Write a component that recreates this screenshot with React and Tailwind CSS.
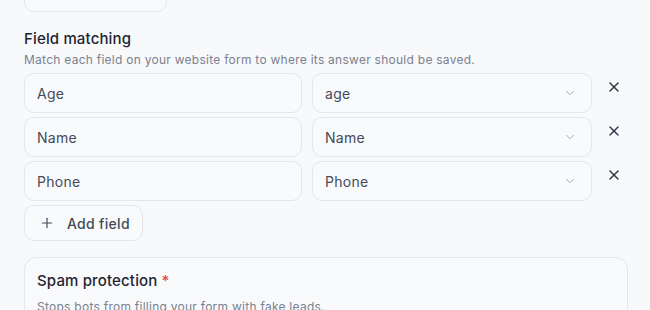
import React, { useState } from "react";
import { X, ChevronDown, Plus } from "lucide-react";

function App() {
  const [rows, setRows] = useState([
    { field: "Age", target: "age" },
    { field: "Name", target: "Name" },
    { field: "Phone", target: "Phone" },
  ]);

  return (
    <div
      className="w-[650px] h-[310px] overflow-hidden bg-[#f8f9fb] flex flex-col px-6"
      style={{ fontFamily: "Inter, 'Noto Sans', sans-serif" }}
    >
      {/* button cut off above */}
      <div className="w-[143px] h-[36px] mt-[-24px] shrink-0 rounded-[10px] border border-[#e4e6ea] bg-[#f9fafb]" />

      {/* Field matching */}
      <div className="mt-[16px] w-[604px]">
        <h2 className="text-[15px] leading-[22px] font-medium tracking-[0.15px] text-[#1f2533]">
          Field matching
        </h2>
        <p className="mt-[2px] text-[12px] leading-[16px] tracking-[0.26px] text-[#7a8190]">
          Match each field on your website form to where its answer should be saved.
        </p>

        <div className="mt-[5px] flex flex-col gap-[4px]">
          {rows.map((row, i) => (
            <div key={i} className="flex items-start">
              <div className="flex-1 flex gap-[10px]">
                <div className="flex-1 h-[40px] rounded-[10px] border border-[#e4e6ea] bg-[#f9fafb] px-3 flex items-center text-[14px] tracking-[0.3px] text-[#434b5a]">
                  {row.field}
                </div>
                <div className="flex-1 h-[40px] rounded-[10px] border border-[#e4e6ea] bg-[#f9fafb] pl-3 pr-[14px] flex items-center justify-between text-[14px] tracking-[0.3px] text-[#434b5a]">
                  <span>{row.target}</span>
                  <ChevronDown size={14} strokeWidth={1.5} className="text-[#9aa1ad]" />
                </div>
              </div>
              <button
                onClick={() => setRows(rows.filter((_, j) => j !== i))}
                className="ml-[8px] w-[28px] h-[28px] flex items-center justify-center text-[#2b3445]"
              >
                <X size={16} strokeWidth={2} />
              </button>
            </div>
          ))}
        </div>

        <button className="mt-[4px] h-[36px] pl-[14px] pr-[12px] rounded-[10px] border border-[#e4e6ea] bg-[#f9fafb] flex items-center gap-[12px] text-[14px] font-medium tracking-[0.3px] text-[#434b5a]">
          <Plus size={16} strokeWidth={1.75} />
          Add field
        </button>

        {/* Spam protection */}
        <div className="mt-[16px] rounded-[12px] border border-[#e4e6ea] bg-[#f9fafb] px-3 pt-[12px] pb-4">
          <h3 className="text-[15px] leading-[22px] font-medium tracking-[0.15px] text-[#1f2533]">
            Spam protection <span className="text-[#e5484d]">*</span>
          </h3>
          <p className="mt-[7px] text-[12px] leading-[16px] tracking-[0.26px] text-[#7a8190]">
            Stops bots from filling your form with fake leads.
          </p>
        </div>
      </div>
    </div>
  );
}

export default App;
